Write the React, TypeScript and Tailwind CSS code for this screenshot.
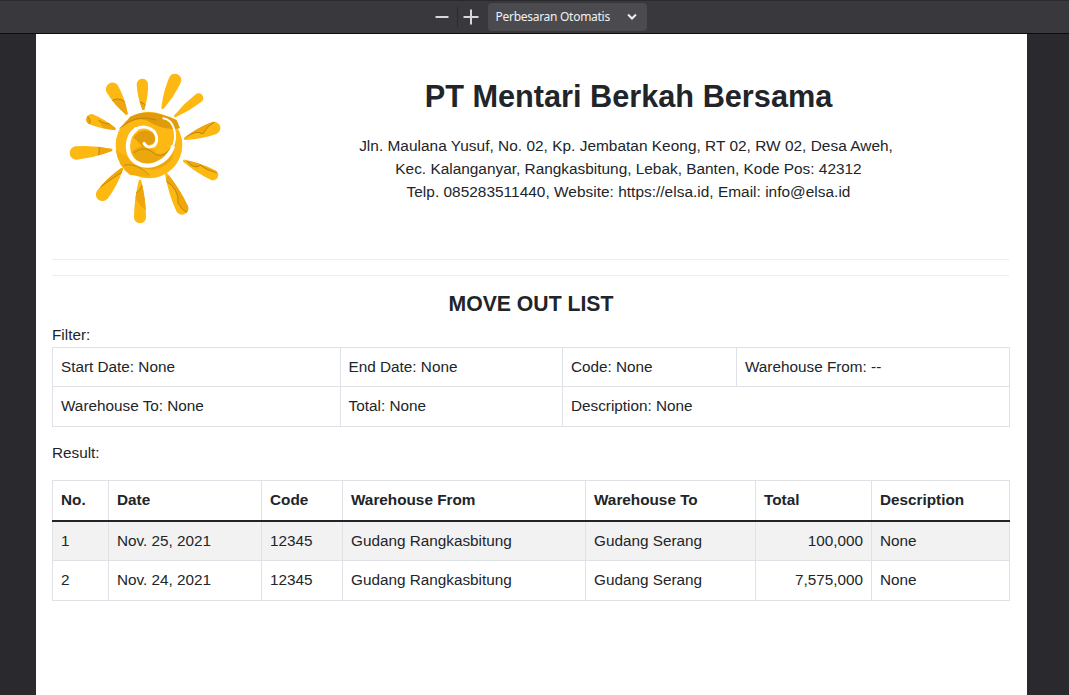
import React from "react";

const rays: [number, number, number, number, number][] = [
  [187, 87, 20, 229, 160],
  [277, 73, 17, 280, 146],
  [375, 60, 19, 338, 143],
  [446, 114, 14, 376, 168],
  [493, 204, 19, 406, 236],
  [489, 345, 16, 403, 303],
  [396, 445, 19, 349, 343],
  [270, 472, 18, 270, 363],
  [157, 404, 20, 215, 328],
  [78, 279, 20, 183, 270],
  [124, 178, 16, 193, 206],
];

function teardrop(x: number, y: number, r: number, tx: number, ty: number) {
  const dx = tx - x;
  const dy = ty - y;
  const a = Math.atan2(dy, dx);
  const nx = Math.cos(a + Math.PI / 2);
  const ny = Math.sin(a + Math.PI / 2);
  const f = (v: number) => v.toFixed(1);
  const t = 4;
  const x1 = x + nx * r;
  const y1 = y + ny * r;
  const x2 = x - nx * r;
  const y2 = y - ny * r;
  const tx1 = tx + nx * t;
  const ty1 = ty + ny * t;
  const tx2 = tx - nx * t;
  const ty2 = ty - ny * t;
  const mx = (x + tx) / 2;
  const my = (y + ty) / 2;
  const w = (r + t) / 2 + r * 0.36;
  return `M${f(x1)} ${f(y1)} Q${f(mx + nx * w)} ${f(my + ny * w)} ${f(tx1)} ${f(ty1)} A${t} ${t} 0 0 0 ${f(tx2)} ${f(ty2)} Q${f(mx - nx * w)} ${f(my - ny * w)} ${f(x2)} ${f(y2)} A${r} ${r} 0 0 0 ${f(x1)} ${f(y1)}Z`;
}

function Sun() {
  return (
    <svg viewBox="0 0 600 540" className="block w-[200px] h-[180px]">
      <defs>
        <clipPath id="sun-rays">
          {rays.map((r, i) => (
            <path key={i} d={teardrop(r[0], r[1], r[2], r[3], r[4])} />
          ))}
        </clipPath>
      </defs>
      {rays.map((r, i) => (
        <path key={i} d={teardrop(r[0], r[1], r[2], r[3], r[4])} fill="#fdb813" />
      ))}
      <g clipPath="url(#sun-rays)">
        <g fill="#eea60d">
          <path d="M180 125 Q205 108 225 126 L240 170 L215 160Z" />
          <path d="M258 122 Q282 126 292 142 L282 155 L262 150Z" />
          <path d="M108 165 Q126 178 118 192 L100 180Z" />
          <path d="M145 180 Q172 198 196 188 L200 212 L160 205Z" />
          <path d="M146 258 Q152 282 136 302 L190 275 L188 258Z" />
          <path d="M150 382 Q190 352 218 336 L225 320 L195 325Z" />
          <path d="M250 402 Q275 395 280 362 L292 360 L292 452 Q270 445 250 402Z" />
          <path d="M345 362 Q388 385 384 430 Q396 452 418 462 L420 420 L360 335Z" />
          <path d="M403 234 Q440 208 458 222 Q472 198 495 185 L440 195 L400 222Z" />
          <path d="M410 302 Q430 330 452 316 Q470 332 500 338 L440 305Z" />
        </g>
        <g fill="none" stroke="#9a6b0c" strokeWidth="2.5" opacity="0.75">
          <path d="M180 125 Q205 108 225 126" />
          <path d="M258 122 Q282 126 292 142" />
          <path d="M108 165 Q126 178 118 192 M145 180 Q172 198 196 188" />
          <path d="M146 258 Q152 282 136 302" />
          <path d="M150 382 Q190 352 218 336" />
          <path d="M250 402 Q275 395 280 362" />
          <path d="M345 362 Q388 385 384 430 Q396 452 418 462" />
          <path d="M403 234 Q440 208 458 222 Q472 198 495 185" />
          <path d="M410 302 Q430 330 452 316 Q470 332 500 338" />
        </g>
      </g>
      <circle cx="297" cy="255" r="100" fill="#fdb813" />
      <path d="M215 205 Q262 160 305 190 Q345 212 390 205 L380 180 Q300 140 240 170Z" fill="#e09b0a" />
      <path d="M245 275 Q285 240 320 280 Q350 290 378 250 L365 300 Q320 345 270 320Z" fill="#eba80e" />
      <path d="M197 270 Q250 295 300 350 L240 345 Q205 320 197 270Z" fill="#f5ae0d" />
      <path d="M250 232 Q280 195 318 225 L320 245 L280 262Z" fill="#e29d0b" />
      <g fill="none" stroke="#ffffff" strokeLinecap="round">
        <path d="M340 175 C372 180 384 225 368 262" strokeWidth="6" />
        <path d="M368 262 C350 312 292 330 256 306 C226 284 226 232 258 208" strokeWidth="13" />
        <path d="M258 208 C284 192 322 208 320 240 C318 262 292 268 282 250" strokeWidth="9" />
      </g>
      <g fill="none" stroke="#9a6b0c" strokeWidth="2" opacity="0.75">
        <path d="M208 205 Q260 160 318 180" />
        <path d="M252 278 Q285 252 318 285 Q345 292 362 262" />
        <path d="M222 315 Q262 308 298 345" />
      </g>
    </svg>
  );
}

const cellF = "border border-[#dee2e6] px-2 py-2 font-normal text-left align-top";
const th = "border border-[#dee2e6] border-b-2 border-b-[#212529] px-2 py-2 font-bold text-left align-top";
const td = "border border-[#dee2e6] px-2 py-2 align-top";

const rows = [
  ["1", "Nov. 25, 2021", "12345", "Gudang Rangkasbitung", "Gudang Serang", "100,000", "None"],
  ["2", "Nov. 24, 2021", "12345", "Gudang Rangkasbitung", "Gudang Serang", "7,575,000", "None"],
];

export default function App() {
  return (
    <div className="h-[695px] w-[1069px] overflow-hidden bg-[#2a2a2e] flex flex-col font-['Liberation_Sans',Arial,sans-serif]">
      <header className="h-[34px] shrink-0 bg-[#38383d] border-t border-t-[#2a2a2e] border-b border-b-[#0c0c0d] flex items-center justify-center pl-[12px]">
        <svg width="14" height="14" viewBox="0 0 14 14" className="text-[#d7d7db]">
          <rect x="0.5" y="6" width="13" height="2" fill="currentColor" />
        </svg>
        <div className="w-px h-5 bg-[#2a2a2e] ml-[8px] mr-[5px]" />
        <svg width="16" height="16" viewBox="0 0 16 16" className="text-[#d7d7db]">
          <rect x="0.5" y="7" width="15" height="2" fill="currentColor" />
          <rect x="7" y="0.5" width="2" height="15" fill="currentColor" />
        </svg>
        <div className="ml-[9px] w-[159px] h-[28px] bg-[#4a4a4f] rounded-sm flex items-center pl-2 text-[12px] text-[#f0f0f2] font-['Noto_Sans',sans-serif]">
          <span className="w-[131px] whitespace-nowrap tracking-[-0.28px]">Perbesaran Otomatis</span>
          <svg width="10" height="8" viewBox="0 0 10 8">
            <path d="M1 1.5 L5 5.5 L9 1.5" fill="none" stroke="#f0f0f2" strokeWidth="2" />
          </svg>
        </div>
      </header>

      <main className="ml-[36px] w-[991px] flex-1 bg-white px-4 pt-4 text-[15.3px] leading-[22.5px] text-[#212529]">
        <section className="flex h-[191px]">
          <div className="w-[194px] shrink-0 pt-[10px] -ml-[2px] mr-[2px]">
            <Sun />
          </div>
          <div className="flex-1 text-center">
            <h1 className="text-[30.7px] leading-[36px] font-bold mt-[29px] mb-[19px]">PT Mentari Berkah Bersama</h1>
            <div className="leading-[23px] text-[15.4px]">
              <p className="pr-[5px] tracking-[0.03px]">Jln. Maulana Yusuf, No. 02, Kp. Jembatan Keong, RT 02, RW 02, Desa Aweh,</p>
              <p>Kec. Kalanganyar, Rangkasbitung, Lebak, Banten, Kode Pos: 42312</p>
              <p className="tracking-[0.03px]">Telp. 085283511440, Website: https://elsa.id, Email: info@elsa.id</p>
            </div>
          </div>
        </section>
        <hr className="w-[957px] border-t border-[#eeeeee] mt-[18px]" />
        <hr className="w-[957px] border-t border-[#eeeeee] mt-[15px]" />
        <h2 className="text-center text-[21.2px] leading-[24px] font-bold mt-[16px] mb-[8px] pr-[1px]">MOVE OUT LIST</h2>
        <p>Filter:</p>
        <table className="w-[957px] table-fixed border-collapse">
          <colgroup>
            <col className="w-[287.6px]" />
            <col className="w-[222.4px]" />
            <col className="w-[174px]" />
            <col className="w-[273px]" />
          </colgroup>
          <tbody>
            <tr>
              <td className={cellF}>Start Date: None</td>
              <td className={cellF}>End Date: None</td>
              <td className={cellF}>Code: None</td>
              <td className={cellF}>Warehouse From: --</td>
            </tr>
            <tr>
              <td className={cellF}>Warehouse To: None</td>
              <td className={cellF}>Total: None</td>
              <td className={cellF} colSpan={2}>Description: None</td>
            </tr>
          </tbody>
        </table>
        <p className="mt-[15px] mb-[16px]">Result:</p>
        <table className="w-[957px] table-fixed border-collapse">
          <colgroup>
            <col className="w-[56px]" />
            <col className="w-[153px]" />
            <col className="w-[81px]" />
            <col className="w-[243px]" />
            <col className="w-[170px]" />
            <col className="w-[116px]" />
            <col className="w-[138px]" />
          </colgroup>
          <thead>
            <tr>
              {["No.", "Date", "Code", "Warehouse From", "Warehouse To", "Total", "Description"].map((h) => (
                <th key={h} className={th}>{h}</th>
              ))}
            </tr>
          </thead>
          <tbody>
            {rows.map((r, i) => (
              <tr key={r[0]} className={i === 0 ? "bg-[#f2f2f2]" : ""}>
                {r.map((c, j) => (
                  <td key={j} className={j === 5 ? td + " text-right" : td}>{c}</td>
                ))}
              </tr>
            ))}
          </tbody>
        </table>
      </main>
    </div>
  );
}
